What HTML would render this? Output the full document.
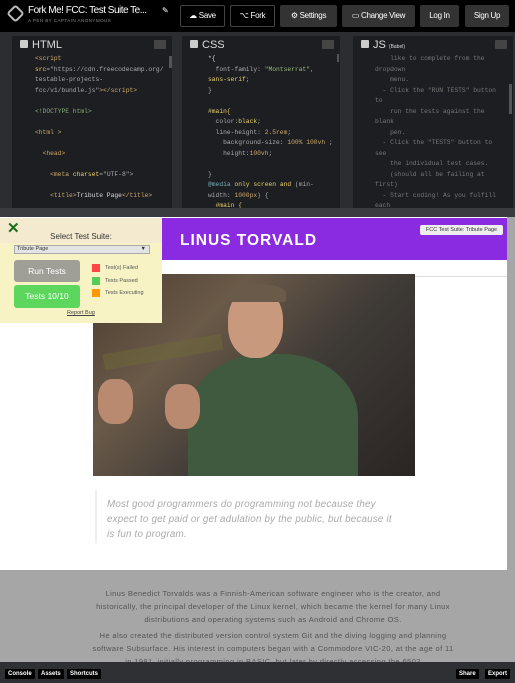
<!DOCTYPE html>
<html><head><style>
*{margin:0;padding:0;box-sizing:border-box}
body{width:515px;height:683px;overflow:hidden;background:#2c2d31;font-family:"Liberation Sans",sans-serif;position:relative}
.hdr{position:absolute;left:0;top:0;width:515px;height:32px;background:#000}
.btn{position:absolute;top:5px;height:22px;color:#fff;font-size:8px;line-height:22px;text-align:center;border-radius:2px;letter-spacing:-0.3px}
.dk{background:#000;border:1px solid #444;line-height:20px}
.gr{background:#333}
.panel{position:absolute;top:36px;height:172px;background:#1d1e22}
.ph{position:absolute;top:3px;left:8px;color:#ddd;font-size:11px}
.ph i{display:inline-block;width:8px;height:8px;background:#ccc;border-radius:1px;margin-right:4px;vertical-align:0}
.chev{position:absolute;top:4px;right:6px;width:12px;height:9px;background:#444;border-radius:1px}
pre{position:absolute;font-family:"Liberation Mono",monospace;font-size:6.3px;line-height:10.5px;color:#aaa;white-space:pre}
.y{color:#e6d06a}.o{color:#cda869}.p{color:#9b7;}
.bar{position:absolute;left:0;top:208px;width:515px;height:9px;background:#3a3b3f}
.prev{position:absolute;left:0;top:217px;width:507px;height:353px;background:#fff}
.scr{position:absolute;left:507px;top:217px;width:8px;height:445px;background:#a6a6a6}
.grey{position:absolute;left:0;top:570px;width:507px;height:92px;background:#a6a6a6;color:#555;font-size:7.6px;line-height:13px;text-align:center;letter-spacing:0.35px}
.foot{position:absolute;left:0;top:662px;width:515px;height:21px;background:#2f3034}
.fb{position:absolute;top:7px;height:10px;background:#000;color:#fff;font-size:6px;line-height:10px;padding:0 3px;border-radius:1px;font-weight:bold}
</style></head><body>
<div class="hdr">
 <div style="position:absolute;left:9px;top:7px;width:13px;height:13px;border:2px solid #bbb;border-radius:3px;transform:rotate(45deg)"></div>
 <div style="position:absolute;left:28px;top:5px;color:#fff;font-size:10px;letter-spacing:-0.5px">Fork Me! FCC: Test Suite Te...</div>
 <div style="position:absolute;left:162px;top:6px;color:#fff;font-size:8px">✎</div>
 <div style="position:absolute;left:28px;top:18px;color:#888;font-size:4.6px;letter-spacing:0.4px">A PEN BY CAPTAIN ANONYMOUS</div>
 <div class="btn dk" style="left:180px;width:45px">☁ Save</div>
 <div class="btn dk" style="left:230px;width:45px">⌥ Fork</div>
 <div class="btn gr" style="left:280px;width:57px">⚙ Settings</div>
 <div class="btn gr" style="left:342px;width:73px">▭ Change View</div>
 <div class="btn gr" style="left:420px;width:39px">Log In</div>
 <div class="btn gr" style="left:465px;width:44px">Sign Up</div>
</div>
<div class="panel" style="left:12px;width:160px">
 <div class="ph"><i></i>HTML</div><div class="chev"></div>
 <div style="position:absolute;left:157px;top:20px;width:3px;height:12px;background:#555"></div>
<pre style="left:23px;top:18px"><span class="o">&lt;script</span>
<span class="y">src</span>="https://cdn.freecodecamp.org/
testable-projects-
fcc/v1/bundle.js"<span class="o">&gt;&lt;/script&gt;</span>

<span style="color:#8a7">&lt;!DOCTYPE html&gt;</span>

<span class="o">&lt;html &gt;</span>

  <span class="o">&lt;head&gt;</span>

    <span class="o">&lt;meta</span> <span class="y">charset</span>="UTF-8"&gt;

    <span class="o">&lt;title&gt;</span><span style="color:#ddd">Tribute Page</span><span class="o">&lt;/title&gt;</span></pre>
</div>
<div class="panel" style="left:182px;width:158px">
 <div class="ph"><i></i>CSS</div><div class="chev"></div>
 <div style="position:absolute;left:155px;top:18px;width:2px;height:8px;background:#555"></div>
<pre style="left:26px;top:18px"><span style="color:#ddd">*{</span>
  font-family: <span class="p">"Montserrat"</span>,
<span class="y">sans-serif</span>;
}

<span class="y">#main{</span>
  color:<span class="y">black</span>;
  line-height: <span class="o">2.5rem</span>;
    background-size: <span class="o">100% 100vh</span> ;
    height:<span class="o">100vh</span>;

}
<span style="color:#7ab">@media</span> <span class="y">only screen and</span> (min-
width: <span class="o">1000px</span>) {
  <span class="y">#main {</span></pre>
</div>
<div class="panel" style="left:353px;width:160px">
 <div class="ph"><i></i>JS <span style="font-size:5px">(Babel)</span></div><div class="chev"></div>
 <div style="position:absolute;left:156px;top:48px;width:3px;height:30px;background:#555"></div>
<pre style="left:22px;top:18px;color:#777">    like to complete from the
dropdown
    menu.
  - Click the "RUN TESTS" button
to
    run the tests against the
blank
    pen.
  - Click the "TESTS" button to
see
    the individual test cases.
    (should all be failing at
first)
  - Start coding! As you fulfill
each</pre>
</div>
<div class="bar"></div>
<div class="prev">
 <div style="position:absolute;left:162px;top:1px;width:345px;height:42px;background:#8a2be2"></div>
 <div style="position:absolute;left:180px;top:15px;color:#fff;font-size:15.5px;font-weight:bold;letter-spacing:1px">LINUS TORVALD</div>
 <div style="position:absolute;left:420px;top:8px;width:83px;height:10px;background:#eee;border-radius:2px;font-size:5.5px;line-height:10px;text-align:center;color:#333">FCC Test Suite: Tribute Page</div>
 <div style="position:absolute;left:0;top:43px;width:507px;height:17px;border-bottom:1px solid #ddd"></div>
 <div style="position:absolute;left:93px;top:57px;width:322px;height:202px;background:linear-gradient(135deg,#4a3c30,#6b5a48 30%,#3e3a36 60%,#2a2522);overflow:hidden">
  <div style="position:absolute;left:10px;top:70px;width:120px;height:16px;background:#6d6a3a;opacity:.5;transform:rotate(-10deg)"></div>
  <div style="position:absolute;left:95px;top:80px;width:170px;height:140px;background:#3f5a3e;border-radius:45% 45% 0 0"></div>
  <div style="position:absolute;left:135px;top:14px;width:55px;height:70px;background:#c9997e;border-radius:45%"></div>
  <div style="position:absolute;left:135px;top:10px;width:58px;height:18px;background:#6a5a4a;border-radius:50% 50% 0 0"></div>
  <div style="position:absolute;left:5px;top:105px;width:35px;height:45px;background:#b98a70;border-radius:40%"></div>
  <div style="position:absolute;left:72px;top:110px;width:35px;height:45px;background:#b98a70;border-radius:40%"></div>
 </div>
 <div style="position:absolute;left:95px;top:273px;width:2px;height:53px;background:#eee"></div>
 <div style="position:absolute;left:107px;top:280px;width:295px;color:#aaa;font-style:italic;font-size:9.8px;line-height:15px;letter-spacing:0.2px">Most good programmers do programming not because they expect to get paid or get adulation by the public, but because it is fun to program.</div>
</div>
<div class="grey">
 <div style="position:absolute;left:92px;top:17px;width:362px">Linus Benedict Torvalds was a Finnish-American software engineer who is the creator, and historically, the principal developer of the Linux kernel, which became the kernel for many Linux distributions and operating systems such as Android and Chrome OS.</div>
 <div style="position:absolute;left:90px;top:59px;width:366px">He also created the distributed version control system Git and the diving logging and planning software Subsurface. His interest in computers began with a Commodore VIC-20, at the age of 11 in 1981, initially programming in BASIC, but later by directly accessing the 6502</div>
</div>
<div class="scr"></div>
<div style="position:absolute;left:0;top:218px;width:162px;height:105px;background:#f7f3c4">
 <div style="position:absolute;left:0;top:0;width:162px;height:25px;background:#f3ead0"></div>
 <div style="position:absolute;left:7px;top:1px;color:#1a6e1a;font-size:15px;font-weight:bold">✕</div>
 <div style="position:absolute;left:0;top:14px;width:162px;text-align:center;font-size:8px;color:#333">Select Test Suite:</div>
 <div style="position:absolute;left:14px;top:27px;width:136px;height:9px;background:#e4e4e4;border:1px solid #aaa;font-size:5.5px;line-height:7px;padding-left:2px;color:#333">Tribute Page<span style="position:absolute;right:3px">▼</span></div>
 <div style="position:absolute;left:14px;top:42px;width:66px;height:22px;background:#a09f97;border-radius:3px;color:#fff;font-size:8.5px;line-height:22px;text-align:center">Run Tests</div>
 <div style="position:absolute;left:14px;top:67px;width:66px;height:23px;background:#5cd65c;border-radius:3px;color:#fff;font-size:8.5px;line-height:23px;text-align:center">Tests 10/10</div>
 <div style="position:absolute;left:92px;top:46px;width:8px;height:8px;background:#f44"></div>
 <div style="position:absolute;left:92px;top:59px;width:8px;height:8px;background:#5c5"></div>
 <div style="position:absolute;left:92px;top:71px;width:8px;height:8px;background:#f90"></div>
 <div style="position:absolute;left:105px;top:46px;font-size:5.5px;color:#555;line-height:8px">Test(s) Failed</div>
 <div style="position:absolute;left:105px;top:59px;font-size:5.5px;color:#555;line-height:8px">Tests Passed</div>
 <div style="position:absolute;left:105px;top:71px;font-size:5.5px;color:#555;line-height:8px">Tests Executing</div>
 <div style="position:absolute;left:67px;top:92px;font-size:5.5px;color:#444;text-decoration:underline">Report Bug</div>
</div>
<div class="foot">
 <div class="fb" style="left:5px">Console</div>
 <div class="fb" style="left:38px">Assets</div>
 <div class="fb" style="left:67px">Shortcuts</div>
 <div class="fb" style="left:456px">Share</div>
 <div class="fb" style="left:485px">Export</div>
</div>
</body></html>
